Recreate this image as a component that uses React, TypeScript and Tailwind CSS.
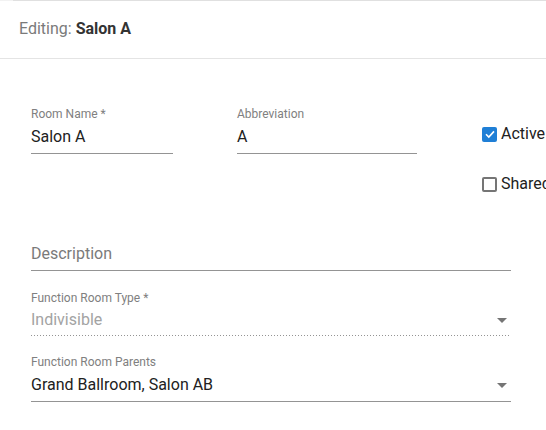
import React from "react";

function Arrow() {
  return (
    <svg width="10" height="5" viewBox="0 0 10 5" className="mr-[4px] shrink-0">
      <path d="M0 0 L10 0 L5 5 Z" fill="#757575" />
    </svg>
  );
}

function TextField({ label, value, width }: { label: string; value: string; width: string }) {
  return (
    <div className={`flex flex-col ${width}`}>
      <div className="text-xs leading-4 text-[#808080]">{label}</div>
      <div className="mt-[5px] pb-[6px] border-b border-[#949494] text-base leading-5 text-[#212121]">{value}</div>
    </div>
  );
}

export default function App() {
  return (
    <div className="w-[546px] h-[430px] overflow-hidden bg-white font-['Roboto',sans-serif]">
      <div className="flex h-px">
        <div className="w-[13px] bg-[#f2f2f2]" />
        <div className="flex-1 bg-[#e0e0e0]" />
      </div>
      <div className="h-[58px] flex items-center pb-[2px] pl-[19px] border-b border-[#e4e4e4] text-base">
        <span className="text-[#7a7a7a]">Editing:</span>
        <span className="ml-[4px] font-bold text-[#333333]">Salon A</span>
      </div>
      <div className="pl-[31px] pt-[47px] w-[700px]">
        <div className="flex items-start">
          <TextField label="Room Name *" value="Salon A" width="w-[142px]" />
          <div className="ml-[64px]">
            <TextField label="Abbreviation" value="A" width="w-[180px]" />
          </div>
          <div className="ml-[65px] pt-[18px] flex flex-col gap-[30px] text-base leading-5 text-[#212121]">
            <div className="flex items-center">
              <div className="w-[15px] h-[15px] rounded-[2px] bg-[#1f7fd6] flex items-center justify-center">
                <svg width="12" height="12" viewBox="0 0 12 12">
                  <path d="M2 6.2 L4.8 9 L10 3.4" stroke="white" strokeWidth="1.6" fill="none" />
                </svg>
              </div>
              <span className="ml-[4px]">Active</span>
            </div>
            <div className="flex items-center">
              <div className="w-[15px] h-[15px] rounded-[2px] border-2 border-[#757575]" />
              <span className="ml-[4px]">Shared</span>
            </div>
          </div>
        </div>

        <div className="mt-[50px] w-[480px] pb-[6px] border-b border-[#949494] text-base leading-5 text-[#7a7a7a]">
          Description
        </div>

        <div className="mt-[19px] w-[480px] flex flex-col">
          <div className="text-xs leading-4 text-[#808080]">Function Room Type *</div>
          <div className="mt-[4px] pb-[5px] flex items-center text-base leading-5 text-[#a3a3a3]">
            <span className="flex-1">Indivisible</span>
            <Arrow />
          </div>
          <div className="h-px bg-[linear-gradient(to_right,rgba(0,0,0,0.42)_33%,transparent_0%)] bg-[length:3px_1px] bg-repeat-x" />
        </div>

        <div className="mt-[18px] w-[480px] flex flex-col">
          <div className="text-xs leading-4 text-[#808080]">Function Room Parents</div>
          <div className="mt-[5px] pb-[6px] border-b border-[#949494] flex items-center text-base leading-5 text-[#212121]">
            <span className="flex-1">Grand Ballroom, Salon AB</span>
            <Arrow />
          </div>
        </div>
      </div>
    </div>
  );
}
